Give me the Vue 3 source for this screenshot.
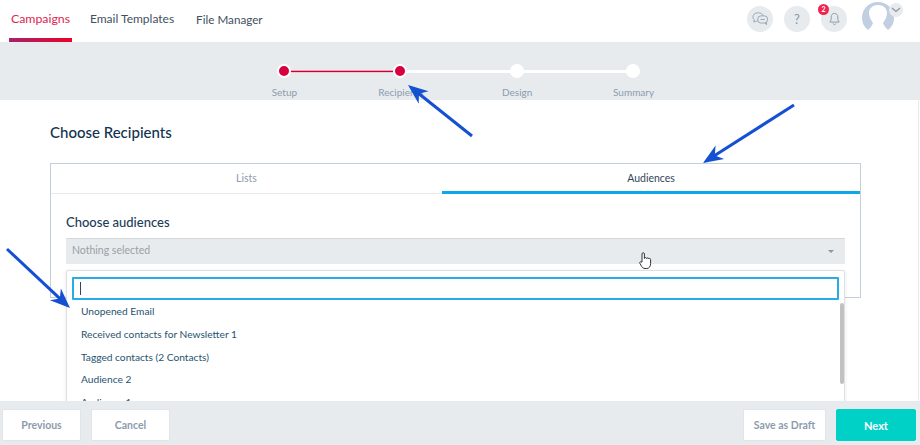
<script setup>
const tabs = ['Campaigns', 'Email Templates', 'File Manager']
const steps = [
  { label: 'Setup', done: true },
  { label: 'Recipients', done: true },
  { label: 'Design', done: false },
  { label: 'Summary', done: false }
]
const items = ['Unopened Email', 'Received contacts for Newsletter 1', 'Tagged contacts (2 Contacts)', 'Audience 2', 'Audience 1']

function arrow(tx, ty, hx, hy) {
  const len = Math.hypot(hx - tx, hy - ty)
  const dx = (hx - tx) / len
  const dy = (hy - ty) / len
  const nx = -dy
  const ny = dx
  const pt = (b, s) => `${(hx - dx * b + nx * s).toFixed(1)},${(hy - dy * b + ny * s).toFixed(1)}`
  return {
    line: { x1: tx, y1: ty, x2: hx - dx * 12, y2: hy - dy * 12 },
    head: [pt(0, 0), pt(20, 8), pt(14, 0), pt(20, -8)].join(' ')
  }
}
const arrows = [arrow(472, 136, 408, 85), arrow(794, 105, 703, 163), arrow(7, 249, 70, 308)]
</script>

<template>
  <div class="page">
    <header class="top">
      <nav class="nav">
        <a v-for="(t, i) in tabs" :key="t" class="nav-item" :class="{ active: i === 0 }">{{ t }}</a>
      </nav>
      <div class="tools">
        <span class="tool">
          <svg width="18" height="16" viewBox="0 0 20 18" fill="none" stroke="#9aa7b5" stroke-width="1.100">
            <path d="M8 2c-3.500 0-6 2-6 4.700 0 1.300.6 2.400 1.500 3.200L3 12.500l2.800-1.200c.5.100 1 .2 1.500.2" />
            <path d="M8 2c2.800 0 5 1.400 5.700 3.300" />
            <rect x="7.500" y="5.500" width="11" height="8" rx="3.500" fill="#e7ebee" />
            <path d="M15.500 13.200l1.800 2.300v-2.800M10.500 9.500h5" />
          </svg>
        </span>
        <span class="tool q">?</span>
        <span class="tool bell">
          <svg width="13" height="14" viewBox="0 0 14 15" fill="none" stroke="#8a97a6" stroke-width="1">
            <path d="M7 1.500c-2.300 0-3.600 1.700-3.600 3.800v3L2 10.800h10L10.600 8.300v-3C10.600 3.200 9.300 1.500 7 1.500z" />
            <path d="M5.500 12.300c.3.800.8 1.200 1.500 1.200s1.200-.4 1.500-1.200" />
          </svg>
          <b class="badge">2</b>
        </span>
        <span class="avatar">
          <svg width="34" height="30" viewBox="0 0 34 30">
            <path fill="#c2cfe2" d="M17 0C26 0 33 6.500 33 16C33 21 31 25 27 28C25 26 23 24 22 21C24 18 26 15 26 11C26 6 22 3 17 3C12 3 8 6 8 11C8 15 10 18 12 21C11 24 9 26 7 28C3 25 1 21 1 16C1 6.500 8 0 17 0Z" />
          </svg>
          <span class="chev">
            <svg width="10" height="6" viewBox="0 0 10 6" fill="none" stroke="#8a97a6" stroke-width="1.200"><path d="M1 1l4 3.500L9 1" /></svg>
          </span>
        </span>
      </div>
    </header>

    <section class="stepper">
      <div v-for="(s, i) in steps" :key="s.label" class="step">
        <span v-if="i < 3" class="link" :class="{ red: i === 0 }"></span>
        <span class="dot" :class="{ done: s.done }"></span>
        <span class="step-label">{{ s.label }}</span>
      </div>
    </section>

    <main class="main">
      <h1 class="title">Choose Recipients</h1>
      <div class="card">
        <div class="tabs">
          <div class="tab">Lists</div>
          <div class="tab on">Audiences</div>
        </div>
        <div class="body">
          <h2 class="sub">Choose audiences</h2>
          <div class="select">
            <span>Nothing selected</span>
            <i class="caret"></i>
          </div>
          <div class="drop">
            <div class="search"><i class="text-cursor"></i></div>
            <ul class="list">
              <li v-for="it in items" :key="it">{{ it }}</li>
            </ul>
            <i class="thumb"></i>
          </div>
        </div>
      </div>
    </main>

    <footer class="foot">
      <div class="group">
        <button class="btn">Previous</button>
        <button class="btn">Cancel</button>
      </div>
      <div class="group">
        <button class="btn draft">Save as Draft</button>
        <button class="btn next">Next</button>
      </div>
    </footer>

    <svg class="overlay" width="920" height="445" viewBox="0 0 920 445">
      <g v-for="(a, i) in arrows" :key="i">
        <line v-bind="a.line" stroke="#1450d2" stroke-width="3" />
        <polygon :points="a.head" fill="#1450d2" />
      </g>
      <path transform="translate(-2 -1.500)" d="M644 263.500V255.500c0-1.700 2.400-1.700 2.400 0v4.500c.2-1.200 2.200-1.200 2.300.1.200-1 2-1 2.100.3.300-.8 1.800-.6 1.800.6v4c0 3-1.500 5-3.800 5h-1.800c-1.700 0-2.500-.8-3.300-2l-1.800-3.200c-.7-1.400 1-2.200 1.800-1.100z" fill="#fff" stroke="#2f3338" stroke-width="1" />
    </svg>
  </div>
</template>

<style>
html, body { margin: 0; background: #fff; overflow: hidden; }
</style>

<style scoped>
.page {
  position: relative;
  width: 920px;
  height: 445px;
  display: flex;
  flex-direction: column;
  overflow: hidden;
  font-family: Lato, "Open Sans", sans-serif;
  color: #10324f;
}
.top {
  height: 42px;
  flex: none;
  display: flex;
  justify-content: space-between;
  background: #fff;
}
.nav {
  display: flex;
  gap: 16px;
  padding-left: 9px;
}
.nav-item {
  height: 42px;
  box-sizing: border-box;
  padding: 11px 2px 0;
  font-size: 12px;
  line-height: 16px;
  color: #3f5062;
}
.nav-item:last-child {
  margin-left: 2px;
  font-size: 11.700px;
}
.nav-item.active {
  font-size: 12.300px;
  color: #e0234f;
  border-bottom: 4px solid #d0063c;
  border-image: linear-gradient(90deg, #a1246b, #ee0029) 1;
}
.tools {
  display: flex;
  align-items: flex-start;
  gap: 11px;
  padding: 6px 25px 0 0;
}
.tool {
  position: relative;
  width: 26px;
  height: 26px;
  border-radius: 50%;
  background: #e7ebee;
  display: flex;
  align-items: center;
  justify-content: center;
}
.q {
  font-size: 13px;
  color: #8a97a6;
}
.badge {
  position: absolute;
  left: -3px;
  top: -2px;
  width: 11px;
  height: 11px;
  border-radius: 50%;
  background: #f0254f;
  color: #fff;
  font-size: 7px;
  line-height: 11px;
  text-align: center;
}
.avatar {
  position: relative;
  width: 34px;
  height: 30px;
  margin: -4px 0 0 3px;
}
.avatar svg { display: block; }
.chev {
  position: absolute;
  right: -8px;
  top: 1px;
  width: 14px;
  height: 14px;
  border-radius: 50%;
  background: #e7ebee;
  display: flex;
  align-items: center;
  justify-content: center;
}
.stepper {
  height: 58px;
  flex: none;
  background: #e7ebee;
  display: flex;
  justify-content: center;
  padding-right: 3px;
}
.step {
  position: relative;
  width: 116.400px;
  display: flex;
  flex-direction: column;
  align-items: center;
  padding-top: 22px;
  box-sizing: border-box;
}
.dot {
  position: relative;
  z-index: 1;
  width: 14px;
  height: 14px;
  border-radius: 50%;
  background: #fff;
  box-sizing: border-box;
}
.dot.done {
  background: #d8003f;
  border: 2px solid #fff;
}
.link {
  position: absolute;
  left: 50%;
  top: 28px;
  width: 100%;
  height: 3px;
  background: #fff;
}
.link.red {
  background: linear-gradient(#eba0b5 0 33%, #c9003a 33% 67%, #f3c4d0 67%);
}
.step-label {
  margin-top: 7px;
  padding-left: 1px;
  font-size: 10px;
  line-height: 14px;
  color: #8d9cad;
}
.main {
  flex: 1;
  min-height: 0;
  overflow: hidden;
  background: #fff;
  padding: 23px 57px 0 50px;
  border-right: 1px solid #e7ebee;
  margin-right: 1px;
}
.title {
  margin: 0 0 22px;
  font-size: 15px;
  line-height: 18px;
  font-weight: 500;
  color: #10324f;
}
.card {
  height: 135px;
  box-sizing: border-box;
  border: 1px solid #c3cfdd;
}
.tabs {
  display: flex;
  height: 30px;
}
.tab {
  flex: 391;
  box-sizing: border-box;
  border-bottom: 1px solid #e7ebee;
  text-align: center;
  font-size: 10.500px;
  line-height: 28px;
  color: #8d9cad;
}
.tab.on {
  flex: 418;
  border-bottom: 3px solid #0fa6ea;
  color: #31465a;
}
.body {
  position: relative;
  padding: 0 15px;
}
.sub {
  margin: 0;
  padding-top: 20px;
  font-size: 13px;
  line-height: 16px;
  font-weight: 500;
  color: #1c3c57;
}
.select {
  margin-top: 8px;
  height: 26px;
  box-sizing: border-box;
  background: #e7ebee;
  border-top: 1px solid #d5d9dc;
  padding: 0 11px 3px 6px;
  display: flex;
  align-items: center;
  justify-content: space-between;
  font-size: 10.500px;
  color: #99a0a6;
}
.caret {
  width: 0;
  height: 0;
  margin-top: 2px;
  border-left: 3px solid transparent;
  border-right: 3px solid transparent;
  border-top: 3px solid #8a97a6;
}
.drop {
  position: absolute;
  left: 15px;
  right: 15px;
  top: 76px;
  height: 160px;
  box-sizing: border-box;
  background: #fff;
  border: 1px solid #dde1e4;
  border-radius: 2px;
  padding: 6px 5px 0;
  box-shadow: 0 1px 4px rgba(0, 0, 0, 0.08);
}
.search {
  height: 23px;
  box-sizing: border-box;
  border: 2px solid #29abe8;
  border-radius: 1px;
  display: flex;
  align-items: center;
  padding-left: 6px;
}
.text-cursor {
  width: 1px;
  height: 13px;
  background: #31465a;
}
.list {
  list-style: none;
  margin: 0;
  padding: 0.400px 0 0 9px;
}
.list li {
  height: 22.700px;
  line-height: 22.700px;
  font-size: 10.200px;
  color: #27536f;
  white-space: nowrap;
}
.thumb {
  position: absolute;
  right: 0;
  top: 32px;
  width: 4px;
  height: 81px;
  background: #c1c1c1;
  border-radius: 2px;
}
.foot {
  height: 44px;
  flex: none;
  position: relative;
  z-index: 2;
  background: #e7ebee;
  display: flex;
  justify-content: space-between;
  padding: 8px 4px 4px 2px;
  box-sizing: border-box;
}
.group {
  display: flex;
  gap: 10px;
}
.btn {
  width: 79px;
  height: 32px;
  padding: 0;
  background: #fff;
  border: 1px solid #dfe5eb;
  border-radius: 2px;
  font-family: inherit;
  font-size: 10.500px;
  font-weight: 700;
  color: #8d9cad;
}
.btn.draft { width: 83px; }
.btn.next {
  width: 80px;
  background: #00d1c7;
  border-color: #00d1c7;
  font-size: 11px;
  color: #fff;
}
.overlay {
  position: absolute;
  left: 0;
  top: 0;
  z-index: 5;
  pointer-events: none;
}
</style>
